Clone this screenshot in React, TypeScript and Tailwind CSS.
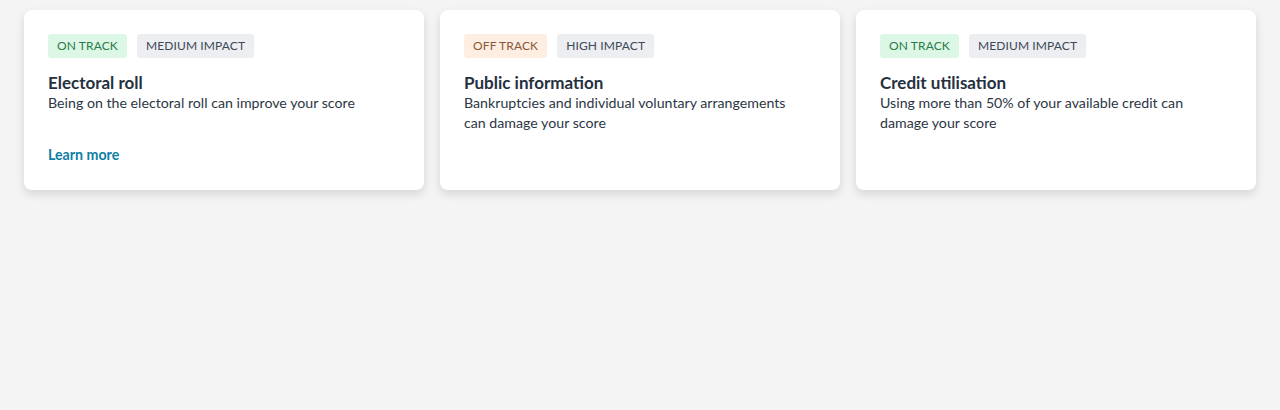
import React from 'react';

type Badge = { label: string; tone: 'on' | 'off' | 'neutral' };

interface Factor {
  status: Badge;
  impact: Badge;
  title: string;
  description: string;
  link?: string;
}

const factors: Factor[] = [
  {
    status: { label: 'On track', tone: 'on' },
    impact: { label: 'Medium impact', tone: 'neutral' },
    title: 'Electoral roll',
    description: 'Being on the electoral roll can improve your score',
    link: 'Learn more',
  },
  {
    status: { label: 'Off track', tone: 'off' },
    impact: { label: 'High impact', tone: 'neutral' },
    title: 'Public information',
    description: 'Bankruptcies and individual voluntary arrangements can damage your score',
  },
  {
    status: { label: 'On track', tone: 'on' },
    impact: { label: 'Medium impact', tone: 'neutral' },
    title: 'Credit utilisation',
    description: 'Using more than 50% of your available credit can damage your score',
  },
];

const toneClasses = {
  on: 'bg-[#dcf7e5] text-[#2b7a4b]',
  off: 'bg-[#fdeee1] text-[#8a5638]',
  neutral: 'bg-[#eceef1] text-[#3f4856]',
};

const Pill: React.FC<{ badge: Badge }> = ({ badge }) => (
  <span
    className={`inline-flex items-center h-6 px-[9px] rounded-[3px] text-[12px] uppercase tracking-[0.01em] ${toneClasses[badge.tone]}`}
  >
    {badge.label}
  </span>
);

const FactorCard: React.FC<{ factor: Factor }> = ({ factor }) => (
  <div className="bg-white rounded-lg p-6 min-h-[180px] flex flex-col shadow-[0_4px_10px_rgba(0,0,0,0.13)]">
    <div className="flex items-center gap-[10px]">
      <Pill badge={factor.status} />
      <Pill badge={factor.impact} />
    </div>
    <h3 className="mt-[15px] text-[17px] leading-5 font-bold text-[#25303f]">{factor.title}</h3>
    <p className="text-[14.2px] leading-5 text-[#2c3644] pr-6">{factor.description}</p>
    {factor.link && (
      <a href="#" className="mt-8 text-[14.2px] leading-5 font-bold text-[#0e7fa6]">
        {factor.link}
      </a>
    )}
  </div>
);

export default function App() {
  return (
    <div className="min-h-[410px] bg-[#f4f4f4] px-6 pt-[10px] font-['Lato','Noto_Sans',sans-serif]">
      <div className="grid grid-cols-3 gap-4">
        {factors.map((f) => (
          <FactorCard key={f.title} factor={f} />
        ))}
      </div>
    </div>
  );
}
